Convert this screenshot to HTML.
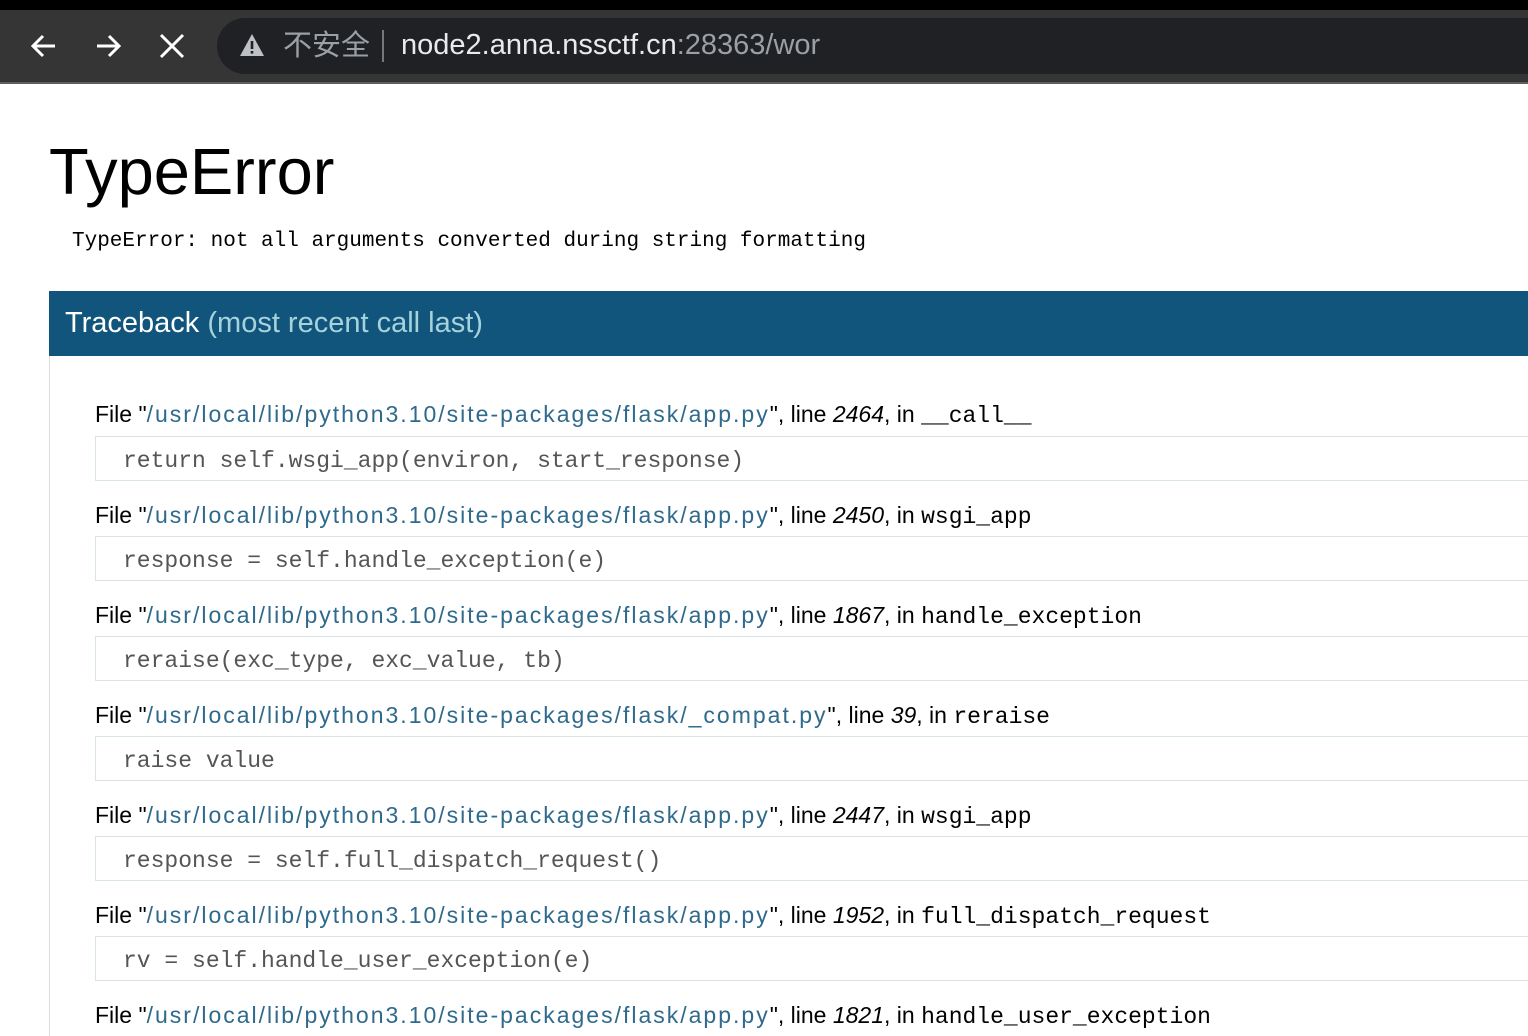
<!DOCTYPE html>
<html><head><meta charset="utf-8"><style>
*{margin:0;padding:0;box-sizing:border-box}
body{width:1528px;height:1027px;overflow:hidden;background:#fff;position:relative;font-family:"Liberation Sans",sans-serif}
.top{position:absolute;left:0;top:0;width:1528px;height:10px;background:#000}
.bar{position:absolute;left:0;top:10px;width:1528px;height:72px;background:#353535}
.line{position:absolute;left:0;top:82px;width:1528px;height:2px;background:#5f5f5f}
.pill{position:absolute;left:217px;top:18px;width:1400px;height:56px;border-radius:28px;background:#202124}
.url{position:absolute;top:29px;font-size:29px;color:#e8eaed;white-space:nowrap}
h1{position:absolute;left:49px;top:134px;font-size:65px;font-weight:normal;color:#000}
.msg{position:absolute;left:72px;top:230px;font-family:"Liberation Mono",monospace;font-size:21px;color:#000}
.tb{position:absolute;left:49px;top:291px;width:1479px;height:65px;background:#11557c;color:#fff;font-size:29px;padding:16px 16px}
.tb span{color:#a6d3db}
.lb{position:absolute;left:49px;top:356px;width:1px;height:680px;background:#ddd}
.f{position:absolute;left:95px;font-size:23px;color:#000;white-space:nowrap}
.f .p{color:#2f6a8c;letter-spacing:2px}
.f i{font-style:italic}
.f .fn{font-family:"Liberation Mono",monospace}
.c{position:absolute;left:95px;width:1450px;height:45px;border:1px solid #d8e4e8;font-family:"Liberation Mono",monospace;font-size:23px;color:#555;padding:11px 0 0 27px;white-space:pre}
</style></head><body>
<div class="top"></div><div class="bar"></div><div class="line"></div>
<svg style="position:absolute;left:28px;top:30px" width="32" height="32" viewBox="0 0 32 32"><path d="M27 16H5M15 6L5 16l10 10" stroke="#fff" stroke-width="3" fill="none"/></svg>
<svg style="position:absolute;left:92px;top:30px" width="32" height="32" viewBox="0 0 32 32"><path d="M5 16h22M17 6l10 10-10 10" stroke="#fff" stroke-width="3" fill="none"/></svg>
<svg style="position:absolute;left:158px;top:32px" width="28" height="28" viewBox="0 0 28 28"><path d="M3 3l22 22M25 3L3 25" stroke="#fff" stroke-width="3"/></svg>
<div class="pill"></div>
<svg style="position:absolute;left:239px;top:33px" width="26" height="24" viewBox="0 0 26 24"><path d="M13 1L25 23H1z" fill="#bdc1c6"/><rect x="11.7" y="8" width="2.6" height="8" fill="#202124"/><rect x="11.7" y="18" width="2.6" height="2.6" fill="#202124"/></svg>
<div class="url" style="left:283px;top:26px;color:#9aa0a6;font-family:'Liberation Sans','Noto Sans CJK SC',sans-serif;line-height:40px">不安全</div>
<div style="position:absolute;left:382px;top:30px;width:2px;height:32px;background:#777"></div>
<div class="url" style="left:401px">node2.anna.nssctf.cn<span style="color:#9aa0a6">:28363/wor</span></div>
<h1>TypeError</h1>
<div class="msg">TypeError: not all arguments converted during string formatting</div>
<div class="tb">Traceback <span>(most recent call last)</span></div>
<div class="lb"></div>

<div class="f" style="top:401px">File "<span class="p">/usr/local/lib/python3.10/site-packages/flask/app.py</span>", line <i>2464</i>, in <span class="fn">__call__</span></div>
<div class="c" style="top:436px">return self.wsgi_app(environ, start_response)</div>
<div class="f" style="top:502px">File "<span class="p">/usr/local/lib/python3.10/site-packages/flask/app.py</span>", line <i>2450</i>, in <span class="fn">wsgi_app</span></div>
<div class="c" style="top:536px">response = self.handle_exception(e)</div>
<div class="f" style="top:602px">File "<span class="p">/usr/local/lib/python3.10/site-packages/flask/app.py</span>", line <i>1867</i>, in <span class="fn">handle_exception</span></div>
<div class="c" style="top:636px">reraise(exc_type, exc_value, tb)</div>
<div class="f" style="top:702px">File "<span class="p">/usr/local/lib/python3.10/site-packages/flask/_compat.py</span>", line <i>39</i>, in <span class="fn">reraise</span></div>
<div class="c" style="top:736px">raise value</div>
<div class="f" style="top:802px">File "<span class="p">/usr/local/lib/python3.10/site-packages/flask/app.py</span>", line <i>2447</i>, in <span class="fn">wsgi_app</span></div>
<div class="c" style="top:836px">response = self.full_dispatch_request()</div>
<div class="f" style="top:902px">File "<span class="p">/usr/local/lib/python3.10/site-packages/flask/app.py</span>", line <i>1952</i>, in <span class="fn">full_dispatch_request</span></div>
<div class="c" style="top:936px">rv = self.handle_user_exception(e)</div>
<div class="f" style="top:1002px">File "<span class="p">/usr/local/lib/python3.10/site-packages/flask/app.py</span>", line <i>1821</i>, in <span class="fn">handle_user_exception</span></div>
</body></html>
